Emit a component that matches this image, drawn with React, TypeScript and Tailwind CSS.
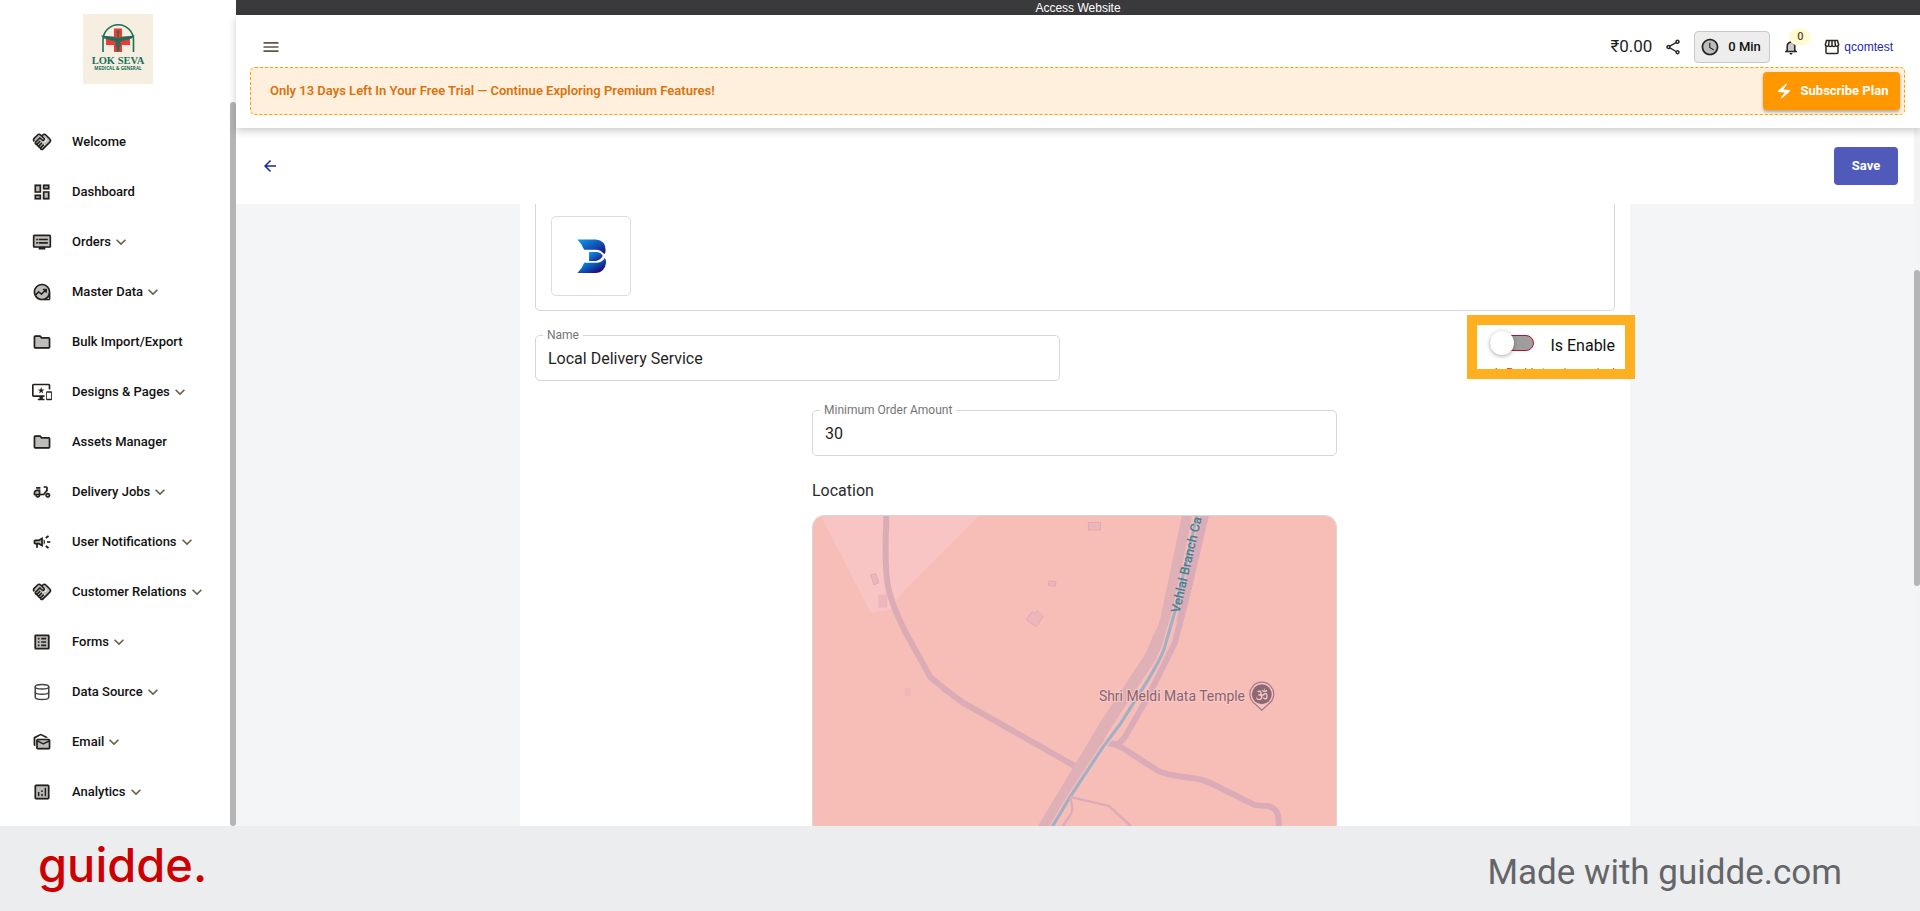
import React from "react";
import type { IconType } from "react-icons";
import {
  MdAnalytics, MdOutlineAnalytics, MdArrowBack, MdElectricBolt, MdCampaign, MdOutlineCampaign,
  MdDashboard, MdOutlineDashboard, MdDataExploration, MdOutlineDataExploration,
  MdDeliveryDining, MdOutlineDeliveryDining, MdDvr, MdOutlineDvr, MdFolder, MdOutlineFolder,
  MdHandshake, MdOutlineHandshake, MdOutlineImportantDevices, MdOutlineListAlt,
  MdMarkAsUnread, MdOutlineMarkAsUnread, MdKeyboardArrowDown, MdMenu,
  MdNotifications, MdOutlineNotifications, MdWatchLater, MdOutlineWatchLater, MdOutlineShare,
} from "react-icons/md";
import { FaOm } from "react-icons/fa";
import { Database } from "lucide-react";

type NavItem = { label: string; line?: IconType; fill?: IconType; back?: boolean; more?: boolean };

const NAV: NavItem[] = [
  { label: "Welcome", line: MdOutlineHandshake, fill: MdHandshake },
  { label: "Dashboard", line: MdOutlineDashboard, fill: MdDashboard },
  { label: "Orders", line: MdOutlineDvr, fill: MdDvr, back: true, more: true },
  { label: "Master Data", line: MdOutlineDataExploration, fill: MdDataExploration, more: true },
  { label: "Bulk Import/Export", line: MdOutlineFolder, fill: MdFolder },
  { label: "Designs & Pages", line: MdOutlineImportantDevices, more: true },
  { label: "Assets Manager", line: MdOutlineFolder, fill: MdFolder },
  { label: "Delivery Jobs", line: MdOutlineDeliveryDining, fill: MdDeliveryDining, more: true },
  { label: "User Notifications", line: MdOutlineCampaign, fill: MdCampaign, more: true },
  { label: "Customer Relations", line: MdOutlineHandshake, fill: MdHandshake, more: true },
  { label: "Forms", line: MdOutlineListAlt, back: true, more: true },
  { label: "Data Source", more: true },
  { label: "Email", line: MdOutlineMarkAsUnread, fill: MdMarkAsUnread, more: true },
  { label: "Analytics", line: MdOutlineAnalytics, fill: MdAnalytics, more: true },
];

function TwoTone({ line: Line, fill: Fill, back }: { line: IconType; fill?: IconType; back?: boolean }) {
  return (
    <span className="grid size-5 shrink-0 place-items-center">
      {back && <span className="col-start-1 row-start-1 h-3 w-4 bg-[#bdbdbd]" />}
      {Fill && !back && <Fill className="col-start-1 row-start-1 size-5 text-[#bdbdbd]" />}
      <Line className="col-start-1 row-start-1 size-5 text-[#24211c]" />
    </span>
  );
}

function StoreLogo() {
  return (
    <svg viewBox="0 0 70 70" className="size-[70px]" role="img" aria-label="Lok Seva Medical & General">
      <rect width="70" height="70" fill="#f6eee0" />
      <path d="M20 38V26a15 15 0 0 1 30.500 0v12" fill="none" stroke="#17705a" strokeWidth="1.600" />
      <path d="M31 14.500h8v8h8v8.500h-8V38h-8v-7h-8v-8.500h8z" fill="#ee3b36" />
      <path d="M18 21.500q8 .5 13 1.500 2.500.5 4 2 1.500-1.500 4-2 5-1 13-1.500-3 4-8 4.200-3 1.600-7 .8l-2 1-2-1q-4 .8-7-.8-5-.2-8-4.200z" fill="#17705a" />
      <path d="M35 18v20M32 27q7 2 4.500 5t-3 4M38 27q-7 2-4.500 5t3 4" fill="none" stroke="#1c6f58" strokeWidth="1.400" />
      <circle cx="35" cy="18" r="1.400" fill="#17705a" />
      <text x="35" y="50" textAnchor="middle" fontSize="10.500" fontWeight="700" fill="#17705a" fontFamily="'Liberation Serif', serif">LOK SEVA</text>
      <text x="35" y="56" textAnchor="middle" fontSize="4.600" fontWeight="700" fill="#17705a" fontFamily="'Open Sans', sans-serif">MEDICAL &amp; GENERAL</text>
    </svg>
  );
}

function Sidebar() {
  return (
    <aside className="flex w-[236px] shrink-0 flex-col bg-white">
      <div className="flex justify-center pt-[14px] pb-[18px]">
        <StoreLogo />
      </div>
      <div className="flex min-h-0 flex-1">
        <nav className="flex-1 overflow-hidden pt-[15px]" aria-label="Main">
          <ul>
            {NAV.map((item) => (
              <li key={item.label}>
                <a href="#" className="flex h-[50px] items-center pl-8 text-[13px] font-medium text-[#111]">
                  {item.line ? (
                    <TwoTone line={item.line} fill={item.fill} back={item.back} />
                  ) : (
                    <span className="grid size-5 shrink-0 place-items-center">
                      <Database className="size-[18px] text-[#444]" strokeWidth={2} />
                    </span>
                  )}
                  <span className="ml-5 whitespace-nowrap">{item.label}</span>
                  {item.more && <MdKeyboardArrowDown className="size-5 text-[#6b5f4b]" />}
                </a>
              </li>
            ))}
          </ul>
        </nav>
        <div className="w-[6px] rounded-full bg-[#b5b5b5]" />
      </div>
    </aside>
  );
}

function Header() {
  return (
    <header className="relative z-10 bg-white pb-[13px] shadow-[0_3px_8px_rgba(0,0,0,0.2)]">
      <div className="flex h-[52px] items-center justify-between pt-3 pr-[27px] pl-[25px]">
        <button type="button" aria-label="Toggle menu">
          <MdMenu className="size-5 text-[#5f5545]" />
        </button>
        <div className="flex items-center">
          <span className="mr-3 text-[17px] text-[#1f1f1f]">₹0.00</span>
          <button type="button" aria-label="Share" className="mr-3">
            <MdOutlineShare className="size-[18px] text-[#2b2822]" />
          </button>
          <button type="button" className="mr-3 flex h-8 w-[76px] items-center gap-2 rounded border border-[#c8c8c8] bg-[#ededed] pl-[5px] text-[13px] font-medium text-[#111]">
            <TwoTone line={MdOutlineWatchLater} fill={MdWatchLater} />
            <span className="whitespace-nowrap">0 Min</span>
          </button>
          <button type="button" aria-label="Notifications" className="relative mr-6">
            <MdNotifications className="size-[18px] text-[#c9c9c9]" />
            <MdOutlineNotifications className="absolute inset-0 size-[18px] text-[#2b2822]" />
            <span className="absolute -top-[9px] left-[7px] h-4 w-[22px] rounded-full bg-[#fffbd1] text-center text-[11px] leading-4 font-medium text-[#5a4a34]">0</span>
          </button>
          <a href="#" className="flex items-center gap-1 font-['Liberation_Sans',sans-serif] text-[12px] text-[#1f28a5]">
            <svg viewBox="0 0 16 16" className="size-4" fill="none" stroke="#2b2822" strokeWidth="1.500">
              <path d="M2.500 1.500h11l1.200 4.300a2 2 0 0 1-3.300 1 2.300 2.300 0 0 1-3.400 0 2.300 2.300 0 0 1-3.400 0 2 2 0 0 1-3.300-1zM5.200 1.500l-.6 5M8 1.500V7M10.800 1.500l.6 5M2 7.500v6a1 1 0 0 0 1 1h10a1 1 0 0 0 1-1v-6" />
            </svg>
            qcomtest
          </a>
        </div>
      </div>
      <div className="mr-[15px] ml-[14px] flex h-12 items-center justify-between rounded-[5px] border border-dashed border-[#ffa000] bg-[#fff0de] pr-1 pl-[19px]">
        <p className="text-[13px] font-semibold text-[#d9730d]">
          Only 13 Days Left In Your Free Trial — Continue Exploring Premium Features!
        </p>
        <button type="button" className="flex h-[38px] min-w-[137px] items-center justify-center gap-2 rounded bg-[#ff9800] text-[13px] font-bold text-white shadow-[0_2px_3px_rgba(0,0,0,0.3)]">
          <MdElectricBolt className="size-[18px]" />
          Subscribe Plan
        </button>
      </div>
    </header>
  );
}

function OutlinedField({ id, label, value }: { id: string; label: string; value: string }) {
  return (
    <div className="relative w-full max-w-[525px]">
      <label htmlFor={id} className="absolute -top-2 left-2 bg-white px-1 text-[12px] leading-4 text-[#757575]">
        {label}
      </label>
      <input
        id={id}
        type="text"
        defaultValue={value}
        className="h-[46px] w-full rounded-[5px] border border-[#d6d6d6] bg-white px-3 text-[16px] text-[#1f1f1f]"
      />
    </div>
  );
}

function MapView() {
  return (
    <svg viewBox="0 0 525 400" className="block w-full rounded-xl border border-[#d8d5d5]" role="img" aria-label="Delivery area map">
      <rect width="525" height="400" fill="#f6beb6" />
      <path d="M8 0H166L95 72 86 82 77 94 58 97z" fill="#f8c5c4" />
      <g fill="#edb6bc" stroke="#e3a9b3" strokeWidth="1">
        <rect x="276.500" y="6.500" width="12" height="7.500" />
        <path d="M237 65l7 1-1 4.500-7-1zM214 104l6-8 3 2 2-3 6 6-7 10z" />
        <path d="M58 59l5-1 3 9-5 2z" />
      </g>
      <path d="M65.500 79h9v13h-9zM92 173h6v8h-6z" fill="#edb6bc" />
      <g fill="none" strokeLinejoin="round">
        <path d="M73 -3Q74 1 73 20 72 60 77 78 82 95 93 117L118 162Q133 175 150 187L263 251" stroke="#dbacb6" strokeWidth="6" />
        <path d="M385 -3L366 90 362 105" stroke="#dfafb6" strokeWidth="17" />
        <path d="M377 -3L357 92Q354 112 347 122 340 142 333 150 L295 208 231 314" stroke="#dfb0b6" strokeWidth="12" />
        <path d="M395 -3L376 78 363 128 336 182 313 222Q310 226 306 229L290 227Q307 229 317 237L345 255Q353 260 381 263 390 264 399 268L443 290Q448 291 456 291 466 293 467 302L468 314" stroke="#dbacb8" strokeWidth="6" />
        <path d="M383 0L364 97 361 110" stroke="#f2bcba" strokeWidth="5" />
        <path d="M386 -3L363 97 352 135Q347 147 336 165L309 208 291 232 258 282 239 314" stroke="#f4c0bd" strokeWidth="6" />
        <path d="M386 -3L363 97 352 135Q347 147 336 165L309 208 291 232 258 282 239 314" stroke="#a5afc2" strokeWidth="3.200" />
        <path d="M258 282L297 291 322 314M258 283Q262 293 259 299L249 314" stroke="#dbacb8" strokeWidth="2.400" />
      </g>
      <g fontFamily="Roboto, sans-serif">
        <text transform="translate(368 98) rotate(-77)" fill="#4b7f93" fontSize="13" fontWeight="500">Vehlal Branch Ca</text>
        <text x="287" y="186" fontSize="14" fill="#89636c" stroke="#f8c9c8" strokeWidth="2" paintOrder="stroke">Shri Meldi Mata Temple</text>
      </g>
      <path d="M450.500 195l-7-6.500a12 12 0 1 1 14 0z" fill="#f5c3c3" stroke="#a87882" strokeWidth="1.200" />
      <circle cx="450.500" cy="179" r="10" fill="#8c6873" />
      <FaOm x={444.5} y={173} width={12} height={12} size={12} color="#f4c5c7" />
    </svg>
  );
}

function BrandMark() {
  return (
    <svg viewBox="0 0 80 80" className="size-full" role="img" aria-label="Brand logo">
      <defs>
        <linearGradient id="brandTop" x1="0" y1="0" x2="1" y2="1">
          <stop offset="0" stopColor="#0a9cf0" />
          <stop offset="1" stopColor="#1a0f80" />
        </linearGradient>
        <linearGradient id="brandLow" x1="0" y1="0" x2="1" y2="1">
          <stop offset="0.150" stopColor="#00a8ff" />
          <stop offset="0.850" stopColor="#1b0873" />
        </linearGradient>
      </defs>
      <path d="M26 23H45Q55 24 55 34 55 37 53.500 38 50 33.500 45 33.500H33Q31 28 26 23z" fill="url(#brandTop)" />
      <path d="M38 36H46Q51 37 52 40 50 44 45 45H38z" fill="url(#brandTop)" />
      <path d="M33 47H46Q52 46 54 42 56 44 55.500 47 54 57 45 57.500H26Q31 53 33 47z" fill="url(#brandLow)" />
    </svg>
  );
}

function ServiceForm() {
  return (
    <form className="mx-auto w-full max-w-[1110px] bg-white px-[15px]">
      <div className="rounded-b-[5px] border border-t-0 border-[#d6d6d6] px-[15px] pt-3 pb-[14px]">
        <div className="size-20 rounded-[5px] border border-[#dcdcdc]">
          <BrandMark />
        </div>
      </div>
      <div className="mt-6 flex items-start justify-between gap-8">
        <OutlinedField id="name" label="Name" value="Local Delivery Service" />
        <div className="relative flex h-[46px] shrink-0 flex-col items-end">
          <div className="flex items-start gap-4">
            <input
              id="enabled"
              type="checkbox"
              role="switch"
              className="relative h-4 w-11 appearance-none rounded-full border border-[#b3142f] bg-[#9e9e9e] before:absolute before:-top-[5px] before:-left-px before:size-6 before:rounded-full before:bg-white before:shadow-[0_1px_4px_rgba(0,0,0,0.35)]"
            />
            <label htmlFor="enabled" className="text-[16px] leading-[22px] text-[#111]">Is Enable</label>
          </div>
          <p className="mt-2 text-[11px] leading-4 whitespace-nowrap text-[#f31a1a]">Is Enable:true is required</p>
          <div className="pointer-events-none absolute -top-5 -right-5 h-16 w-[168px] border-[10px] border-[#ffb020]" />
        </div>
      </div>
      <div className="mx-auto mt-[29px] w-full max-w-[526px] pr-px">
        <OutlinedField id="minimum" label="Minimum Order Amount" value="30" />
        <h2 className="mt-[23px] mb-3 text-[16px] leading-6 text-[#2b2b2b]">Location</h2>
        <MapView />
      </div>
    </form>
  );
}

export default function App() {
  return (
    <div className="flex h-screen flex-col overflow-hidden font-['Roboto','Noto_Sans',sans-serif]">
      <div className="flex min-h-0 flex-1">
        <Sidebar />
        <div className="flex min-w-0 flex-1 flex-col bg-white">
          <a href="#" className="flex h-[15px] shrink-0 items-center justify-center bg-[#3a3a3c] pt-px font-['Liberation_Sans',sans-serif] text-[12px] leading-[14px] text-white">
            Access Website
          </a>
          <Header />
          <div className="flex min-h-0 flex-1">
            <div className="flex min-w-0 flex-1 flex-col">
              <div className="flex h-[76px] shrink-0 items-center justify-between pr-4 pl-[25px]">
                <button type="button" aria-label="Back">
                  <MdArrowBack className="size-[18px] text-[#1626a8]" />
                </button>
                <button type="button" className="h-[38px] w-16 rounded bg-[#4f5aba] text-[13px] font-bold text-white">
                  Save
                </button>
              </div>
              <main className="min-h-0 flex-1 overflow-hidden bg-[#f4f5f7]">
                <ServiceForm />
              </main>
            </div>
            <div className="w-[6px] bg-[#f4f4f4] pt-[142px]">
              <div className="h-[316px] rounded-full bg-[#b5b5b5]" />
            </div>
          </div>
        </div>
      </div>
      <footer className="flex h-[85px] shrink-0 items-center justify-between bg-[#ecedef] pr-[78px] pl-[38px]">
        <span className="pb-2 font-['Inter',sans-serif] text-[47px] leading-none font-medium text-[#cc0000]">guidde.</span>
        <span className="pt-2 font-['Roboto',sans-serif] text-[35px] leading-none text-[#646568]">Made with guidde.com</span>
      </footer>
    </div>
  );
}
